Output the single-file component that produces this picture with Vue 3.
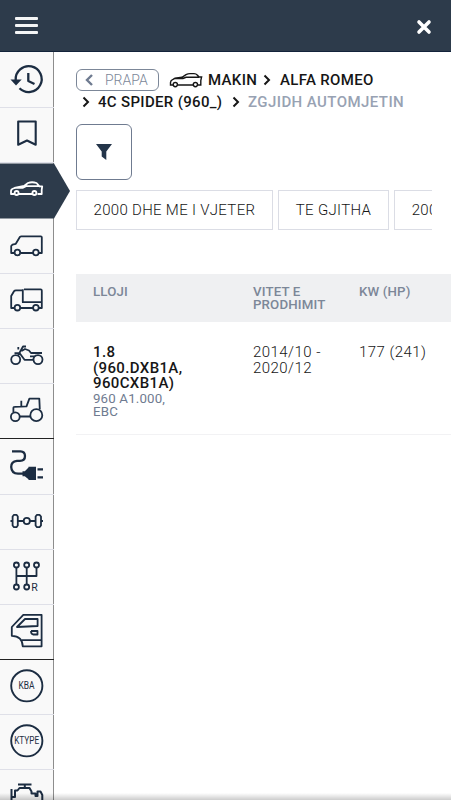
<template>
  <div class="page">
    <header class="top-bar">
      <button class="menu-btn" aria-label="Menu"><i></i><i></i><i></i></button>
      <button class="close-btn" aria-label="Close">
        <svg width="16" height="16" viewBox="0 0 16 16"><path d="M3 3L13 13M13 3L3 13" /></svg>
      </button>
    </header>

    <div class="body">
      <nav class="side-bar">
        <div
          v-for="item in menu"
          :key="item.name"
          class="side-item"
          :class="{ active: item.name === current, last: item.groupEnd }"
          @click="current = item.name"
        >
          <svg class="side-icon" width="54" height="55" viewBox="0 0 54 55">
            <path v-if="item.line" :d="item.line" :stroke-width="item.width || 1.8" />
            <path v-if="item.fill" class="solid" :d="item.fill" />
            <circle v-for="(c, i) in item.circles" :key="i" :cx="c[0]" :cy="c[1]" :r="c[2]" :stroke-width="item.width || 1.8" />
            <text
              v-if="item.text"
              :x="item.textX"
              :y="item.textY"
              :font-size="item.size"
              :textLength="item.textWidth"
              lengthAdjust="spacingAndGlyphs"
            >{{ item.text }}</text>
          </svg>
        </div>
      </nav>

      <main class="content">
        <div class="crumbs">
          <div class="crumb-line">
            <button class="back-btn">
              <svg width="9" height="12" viewBox="0 0 9 12"><path d="M7 1L2 6L7 11" /></svg>
              <span>PRAPA</span>
            </button>
            <svg class="crumb-car" width="34" height="16" viewBox="0 0 34 16">
              <path d="M4 13H1.5V10.5Q1.5 8.3 4 7.3L6 6.3L13 5.3L17 2.6Q19 1.6 21 1.6H25Q27 1.6 28.5 3.2L30 5H32.6L31.8 8.5V13H29M8.5 13H24M6 6.5H14L17 5.3H30" />
              <circle cx="6.3" cy="12.6" r="2.1" />
              <circle cx="26.4" cy="12.6" r="2.1" />
            </svg>
            <span class="makin">MAKIN</span>
            <svg class="arrow" width="8" height="12" viewBox="0 0 8 12"><path d="M1.5 1.5L6 6L1.5 10.5" /></svg>
            <span class="brand">ALFA ROMEO</span>
          </div>
          <div class="crumb-line second">
            <svg class="arrow" width="8" height="12" viewBox="0 0 8 12"><path d="M1.5 1.5L6 6L1.5 10.5" /></svg>
            <span class="model">4C SPIDER (960_)</span>
            <svg class="arrow" width="8" height="12" viewBox="0 0 8 12"><path d="M1.5 1.5L6 6L1.5 10.5" /></svg>
            <span class="choose">ZGJIDH AUTOMJETIN</span>
          </div>
        </div>

        <button class="filter-btn" aria-label="Filter">
          <svg width="18" height="18" viewBox="0 0 18 18"><path d="M1 1H17L11.3 8.5V17L6.7 13.5V8.5Z" /></svg>
        </button>

        <div class="years">
          <button v-for="year in years" :key="year" class="year">{{ year }}</button>
        </div>

        <div class="table">
          <div class="row head">
            <div>LLOJI</div>
            <div>VITET E<br>PRODHIMIT</div>
            <div>KW (HP)</div>
          </div>
          <div v-for="(car, index) in cars" :key="index" class="row">
            <div>
              <div v-for="line in car.type" :key="line" class="type">{{ line }}</div>
              <div v-for="line in car.engine" :key="line" class="engine">{{ line }}</div>
            </div>
            <div><div v-for="line in car.period" :key="line">{{ line }}</div></div>
            <div>{{ car.power }}</div>
          </div>
        </div>
      </main>
    </div>
    <div class="bottom-shade"></div>
  </div>
</template>

<script setup>
import { ref } from 'vue';

const current = ref('car');

// circles: [cx, cy, r], groupEnd draws the dark divider
const menu = [
  {
    name: 'history',
    width: 2.3,
    line: 'M15.7 27A13 13 0 1 1 19.5 35.3M28.3 20V28L34.5 31',
    fill: 'M10.5 26.5H21.7L16 32.5Z'
  },
  { name: 'bookmark', width: 2.1, line: 'M18.2 13.5H35.7V36.7L27 32.5L18.2 36.7Z' },
  {
    name: 'car',
    line: 'M14 31H11V28Q11 26 14.5 25L24 23L28 20Q32 18.5 36.5 20L39.5 23.4H42.2L41.7 27V31H37.5M19 31H32M15 24.8H23L26 23.2H39.5',
    circles: [[16.6, 30, 2], [34.4, 30, 2]]
  },
  {
    name: 'van',
    line: 'M14.3 34H11.2V27L12.5 25.6L15.8 24.8L20 17.8Q20.5 17.3 21.3 17.3H40.8Q41.8 17.3 41.8 18.3V34H39M20.5 34H33',
    circles: [[17.4, 33.5, 2.8], [35.9, 33.5, 2.8]]
  },
  {
    name: 'truck',
    line: 'M14.3 34H11.2V22L14 17.3Q14.6 16.3 16 16.3H23M24 15.3H40.6Q41.8 15.3 41.8 16.5V34H39M20.5 34H33M22.8 15.3V28.2H41.8',
    circles: [[17.4, 33.7, 2.8], [35.9, 33.7, 2.8]]
  },
  {
    name: 'moto',
    circles: [[15.7, 30.6, 4.5], [38, 30.6, 4.5]],
    line: 'M15.8 30.5L23 17.5H26M18.3 18V20.5M19.5 24L24.5 30.8H33L36.5 26M21.5 22L25 20L29 21.5L31 24H42M19.5 24.2H14.5M30 27.3H38L41 30M38 30.5H34'
  },
  {
    name: 'tractor',
    line: 'M13.4 28.6V23.8Q13.4 22.8 14.5 22.8L26.5 22.4L29.4 14.6H39.3L39.8 25.4M21.3 16.7V22.5M20 32.5H30',
    circles: [[15.3, 32.7, 4.4], [36.3, 31.2, 6]],
    groupEnd: true
  },
  {
    name: 'plug',
    width: 2.3,
    line: 'M12 12.3H20.5Q25 12.5 25 17Q25 21.8 20 21.8H17Q11 22.5 11.2 28Q11.5 34.5 18 34.7H24M37.5 30.3H43M37.5 38.3H43',
    fill: 'M22.5 32.2H24.8L28.5 28.5V27.7H36V41H28.5V40.3L24.8 37.2H22.5Z'
  },
  {
    name: 'axle',
    line: 'M12.6 21.5L14 19.8H16.5L17.8 21.5V30.5L16.5 32.2H14L12.6 30.5ZM35.6 21.5L37 19.8H39.5L41 21.5V30.5L39.5 32.2H37L35.6 30.5ZM10.5 26H12.6M17.8 26H23.5M30 26H35.6M41 26H43',
    circles: [[26.8, 26, 3.1]]
  },
  {
    name: 'gearbox',
    line: 'M16.4 17.8V34.2M26.7 17.8V34.2M36.5 17.8V26H16.4',
    circles: [[16.4, 15, 2.5], [26.7, 15, 2.5], [36.5, 15, 2.5], [16.4, 37, 2.5], [26.7, 37, 2.5]],
    text: 'R',
    textX: 34.5,
    textY: 40.5,
    size: 11,
    textWidth: 6.5
  },
  {
    name: 'door',
    line: 'M11.8 22L23.3 9.8H41.6V41.3H22.7Q22.5 31 11.8 30.8ZM17 22L25 14H37.6V21ZM17 22L37.6 21M31 26H37.5V29.5H33Q31 29 31 26M22 35.2H41.6',
    groupEnd: true
  },
  { name: 'kba', width: 1.9, circles: [[26.8, 25.8, 15.6]], text: 'KBA', textX: 26.5, textY: 29.3, size: 10.5, textWidth: 16 },
  { name: 'ktype', width: 1.9, circles: [[26.8, 25.8, 15.6]], text: 'KTYPE', textX: 26.7, textY: 29.3, size: 10.5, textWidth: 25 },
  {
    name: 'engine',
    line: 'M18 14.5H31.5M24.8 14.5V18M11.5 19V40M11.5 27H15V20.5H17.5L19.5 18H29.5L31.5 21.5V23.5H35.5V26H37.5V21.5H40.5L42.3 25V40',
    width: 2
  }
];

const years = ['2000 DHE ME I VJETER', 'TE GJITHA', '2001 - 2010'];

const cars = [
  {
    type: ['1.8', '(960.DXB1A,', '960CXB1A)'],
    engine: ['960 A1.000,', 'EBC'],
    period: ['2014/10 -', '2020/12'],
    power: '177 (241)'
  }
];
</script>

<style>
html,
body {
  overflow: hidden;
  background: #fff;
}
</style>

<style scoped>
.page {
  height: 800px;
  overflow: hidden;
  position: relative;
  font-family: Roboto, "Liberation Sans", sans-serif;
  color: #161616;
}
button {
  font-family: inherit;
  background: none;
  border: 0;
  padding: 0;
  margin: 0;
  color: inherit;
}
svg {
  display: block;
  flex: none;
  fill: none;
}
.top-bar {
  height: 52px;
  box-sizing: border-box;
  background: #2d3b4b;
  border-bottom: 1px solid #13233a;
  display: flex;
  justify-content: space-between;
  padding: 17px 19px 0 15px;
}
.menu-btn {
  width: 23px;
  height: 17px;
  display: flex;
  flex-direction: column;
  justify-content: space-between;
}
.menu-btn i {
  height: 3px;
  border-radius: 1px;
  background: #f4f5f6;
}
.close-btn {
  height: 16px;
  margin-top: 2px;
}
.close-btn path {
  stroke: #fff;
  stroke-width: 3.6;
  stroke-linecap: round;
}
.body {
  display: flex;
}
.side-bar {
  width: 54px;
  height: 748px;
  flex: none;
  box-sizing: border-box;
  padding-top: 1px;
  background: #f9f9f9;
  border-right: 1px solid #8d8d8d;
}
.side-item {
  height: 55.2px;
  width: 54px;
  box-sizing: border-box;
  border-bottom: 1px solid #dfe0e8;
}
.side-item.last {
  border-bottom-color: #222;
}
.side-item.active {
  width: 70px;
  border-bottom: 0;
  background: #2d3b4b;
  clip-path: polygon(0 0, 54px 0, 100% 50%, 54px 100%, 0 100%);
}
.side-icon path,
.side-icon circle {
  stroke: #1c2d42;
  stroke-linejoin: round;
}
.side-icon circle {
  fill: #f9f9f9;
}
.side-icon .solid {
  fill: #1c2d42;
  stroke: none;
}
.side-icon text {
  fill: #1c2d42;
  text-anchor: middle;
}
.active .side-icon path,
.active .side-icon circle {
  stroke: #fff;
}
.active .side-icon circle {
  fill: #2d3b4b;
}
.content {
  flex: 1;
  min-width: 0;
  padding: 17px 0 0 22px;
}
.crumb-line {
  display: flex;
  align-items: center;
  height: 22px;
  font-size: 15px;
  font-weight: 500;
  letter-spacing: 0.33px;
  white-space: nowrap;
}
.back-btn {
  width: 83px;
  height: 22px;
  box-sizing: border-box;
  border: 1px solid #7c8798;
  border-radius: 6px;
  display: flex;
  align-items: center;
  padding-left: 8px;
  font-size: 14px;
  font-weight: 300;
  color: #7c8798;
  letter-spacing: 0;
}
.back-btn svg {
  margin-right: 11px;
}
.back-btn path {
  stroke: #6f7b90;
  stroke-width: 2.4;
}
.crumb-car {
  margin: 0 5px 0 10px;
}
.crumb-car path,
.crumb-car circle {
  stroke: #161616;
  stroke-width: 1.4;
}
.crumb-car circle {
  fill: #fff;
}
.arrow path {
  stroke: #161616;
  stroke-width: 2;
}
.makin {
  width: 55px;
}
.brand {
  margin-left: 9px;
}
.second {
  padding-left: 6px;
}
.model {
  width: 134px;
  margin-left: 8px;
}
.choose {
  margin-left: 8px;
  color: #98a2b3;
  letter-spacing: 0.43px;
}
.filter-btn {
  display: flex;
  align-items: center;
  justify-content: center;
  width: 56px;
  height: 56px;
  margin-top: 11px;
  box-sizing: border-box;
  border: 1px solid #6f7b90;
  border-radius: 6px;
}
.filter-btn path {
  fill: #24354a;
}
.years {
  display: flex;
  gap: 5.5px;
  width: 356px;
  overflow: hidden;
  margin-top: 10px;
}
.year {
  flex: none;
  height: 40px;
  padding: 0 16.5px;
  border: 1px solid #dbdde5;
  font-size: 15px;
  font-weight: 300;
  letter-spacing: 0.31px;
  white-space: nowrap;
}
.table {
  margin-top: 44px;
}
.row {
  display: grid;
  grid-template-columns: 160px 106px 1fr;
  height: 113px;
  box-sizing: border-box;
  padding: 23px 0 0 17px;
  border-bottom: 1px solid #f2f2f4;
  font-size: 15px;
  font-weight: 300;
  letter-spacing: 0.45px;
  line-height: 15.5px;
  white-space: nowrap;
}
.row.head {
  height: 48px;
  padding-top: 11px;
  border: 0;
  background: #eff0f2;
  color: #7c8798;
  font-size: 13.3px;
  font-weight: 500;
  letter-spacing: 0.13px;
  line-height: 13px;
}
.type {
  font-size: 15px;
  font-weight: 500;
  letter-spacing: 0.37px;
}
.engine {
  font-size: 13.3px;
  line-height: 13px;
  font-weight: 400;
  letter-spacing: 0.15px;
  color: #6f7b90;
}
.bottom-shade {
  position: absolute;
  left: 0;
  right: 0;
  bottom: 0;
  height: 7px;
  background: linear-gradient(rgba(0, 0, 0, 0), rgba(0, 0, 0, 0.2));
}
</style>
